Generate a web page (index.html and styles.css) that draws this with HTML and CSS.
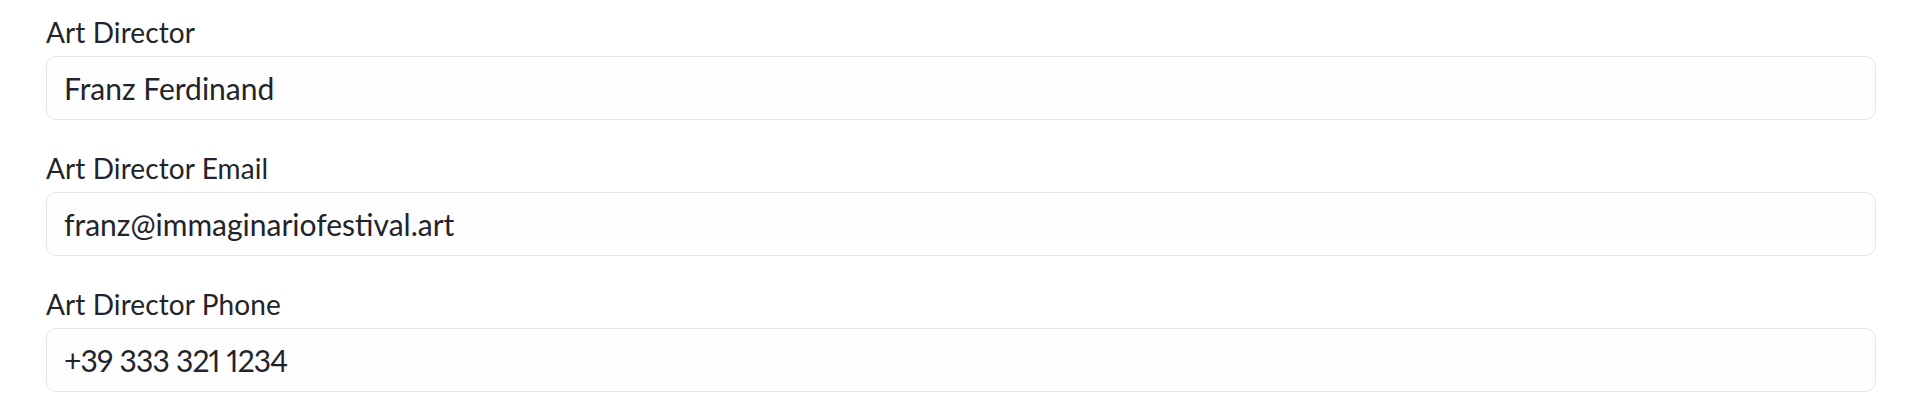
FILE: index.html
```html
<!DOCTYPE html>
<html lang="en">

<head>
    <meta charset="UTF-8">
    <meta name="viewport" content="width=device-width, initial-scale=1.0">
    <title>Art Director</title>

    <link rel="stylesheet" href="styles.css">
</head>

<body>

    <form class="contact-form">
        <div class="field">
            <label for="director">Art Director</label>
            <input type="text" id="director" name="director" value="Franz Ferdinand">
        </div>

        <div class="field">
            <label for="director-email">Art Director Email</label>
            <input type="text" id="director-email" name="director-email" value="franz@immaginariofestival.art">
        </div>

        <div class="field">
            <label for="director-phone">Art Director Phone</label>
            <input type="text" class="phone-input" id="director-phone" name="director-phone" value="+39 333 321 1234">
        </div>
    </form>

</body>

</html>
```

FILE: styles.css
```css
body {
    font-family: Lato, "Liberation Sans", sans-serif;
    margin: 0;
    background-color: #fff;
    color: #23242b;
    overflow: hidden;
}

.contact-form {
    display: flex;
    flex-direction: column;
    gap: 30px;
    padding: 14px 44px 0 46px;
}

.field {
    display: flex;
    flex-direction: column;
    gap: 6px;
}

.field label {
    font-size: 28px;
    line-height: 36px;
    letter-spacing: 0.1px;
}

.field input[type=text] {
    height: 64px;
    padding: 0 17px;
    border: 1px solid #e6e6e6;
    border-radius: 10px;
    background-color: #fdfdfd;
    box-sizing: border-box;
    font-family: Lato, "Liberation Sans", sans-serif;
    font-size: 30px;
    font-variant-numeric: proportional-nums;
    color: #23242b;
    outline: none;
}

.field input.phone-input {
    letter-spacing: -0.8px;
}
```
